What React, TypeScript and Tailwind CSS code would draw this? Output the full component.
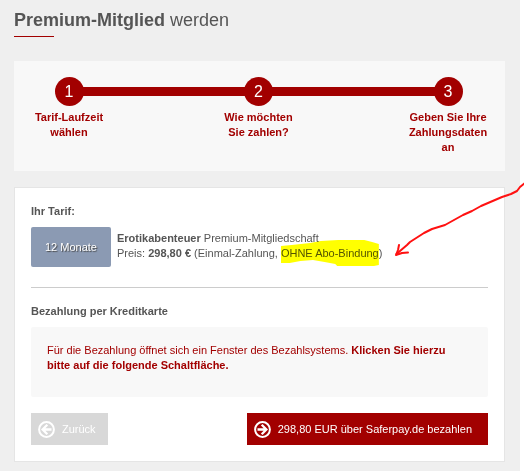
import React from "react";

const steps = [
  { nr: 1, label: "Tarif-Laufzeit wählen" },
  { nr: 2, label: "Wie möchten Sie zahlen?" },
  { nr: 3, label: "Geben Sie Ihre Zahlungsdaten an" },
];

function ArrowCircle({ back = false }: { back?: boolean }) {
  return (
    <svg
      viewBox="0 0 17 17"
      className={back ? "size-[17px] shrink-0" : "size-[17px] shrink-0 rotate-180"}
      fill="none"
      stroke="currentColor"
      aria-hidden="true"
    >
      <circle cx="8.5" cy="8.5" r="7.4" strokeWidth="2" />
      <path d="M13.5 8.5H5M9.3 3.8L4.6 8.5l4.7 4.7" strokeWidth="2.3" />
    </svg>
  );
}

function Steps() {
  return (
    <div className="relative bg-[#f8f8f8] pt-4 pb-2 pr-[17px] pl-[15px]">
      <div className="absolute top-[26px] right-[55px] left-[55px] h-[9px] bg-[#a20000]" />
      <ol className="relative flex min-h-[86px] justify-between">
        {steps.map((step) => (
          <li key={step.nr} className="flex w-20 flex-col items-center">
            <span className="flex size-[29px] items-center justify-center rounded-full bg-[#a20000] text-base text-white">
              {step.nr}
            </span>
            <span className="mt-1 text-center font-bold text-[#a20000]">
              {step.label}
            </span>
          </li>
        ))}
      </ol>
    </div>
  );
}

function Tarif() {
  return (
    <section>
      <h2 className="font-bold">Ihr Tarif:</h2>
      <div className="mt-2 flex items-start gap-1.5">
        <div className="flex h-10 w-20 shrink-0 items-center justify-center rounded-xs bg-[#8b9ab3] text-white [text-shadow:1px_1px_1px_#444]">
          12 Monate
        </div>
        <div className="pt-1 whitespace-nowrap">
          <p>
            <b>Erotikabenteuer</b> Premium-Mitgliedschaft
          </p>
          <p>
            Preis: <b>298,80 €</b> (Einmal-Zahlung,{" "}
            <mark className="relative inline-block bg-transparent text-inherit">
              <svg
                viewBox="0 0 101 26"
                preserveAspectRatio="none"
                className="absolute -top-1.5 left-0 h-[26px] w-full mix-blend-multiply"
                aria-hidden="true"
              >
                <path
                  d="M0 6L11 5 30 3 41 1 59 0H86L94 2 101 4V25L96 26H58L56 24 45 22 33 20 20 21 9 23H0Z"
                  fill="#ff0"
                />
              </svg>
              OHNE Abo-Bindung
            </mark>
            )
          </p>
        </div>
      </div>
    </section>
  );
}

export default function App() {
  return (
    <div className="relative overflow-hidden bg-white pr-1 font-['Liberation_Sans',Arial,sans-serif] text-[11px] leading-[15px] text-[#555]">
      <main className="min-h-screen bg-[#efefef] pt-2 pr-[15px] pb-2 pl-3.5">
        <h1 className="text-lg leading-6">
          <b>Premium-Mitglied</b> werden
        </h1>
        <div className="mt-1 mb-6 h-px w-10 bg-[#a20000]" />
        <Steps />

        <div className="mt-4 border border-[#e5e5e5] bg-white p-4">
          <Tarif />
          <hr className="mt-5 mb-4 border-[#ccc]" />
          <section>
            <h2 className="font-bold">Bezahlung per Kreditkarte</h2>
            <p className="mt-2 min-h-[70px] rounded-xs bg-[#f8f8f8] py-4 pr-8 pl-4 text-[#a20000]">
              Für die Bezahlung öffnet sich ein Fenster des Bezahlsystems.{" "}
              <b>Klicken Sie hierzu bitte auf die folgende Schaltfläche.</b>
            </p>
          </section>
          <div className="mt-4 flex justify-between">
            <button
              type="button"
              className="flex h-8 items-center gap-[7px] bg-[#d8d8d8] pr-3 pl-[7px] text-white"
            >
              <ArrowCircle back />
              Zurück
            </button>
            <button
              type="button"
              className="flex h-8 items-center gap-[7px] bg-[#a20000] pr-4 pl-[7px] text-white"
            >
              <ArrowCircle />
              298,80 EUR über Saferpay.de bezahlen
            </button>
          </div>
        </div>
      </main>

      {/* hand-drawn arrow */}
      <svg
        viewBox="0 0 130 76"
        className="pointer-events-none absolute top-[182px] right-0 h-[76px] w-[130px]"
        fill="none"
        stroke="#f11"
        strokeWidth="2"
        strokeLinejoin="round"
        strokeLinecap="round"
        aria-hidden="true"
      >
        <path d="M131 1L126 5 123 9 117 12 108 15 87 24 78 29 69 33 51 43 38 47 30 51 16 60 13 63 2.5 72" />
        <path d="M5 63L4 68 2 73 8 71 14 70.5" />
      </svg>
    </div>
  );
}
